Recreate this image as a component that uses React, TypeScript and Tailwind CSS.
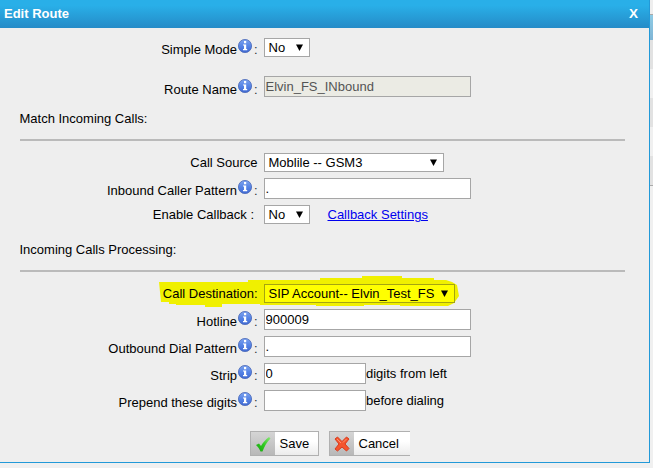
import type { ReactNode } from "react";

function InfoIcon() {
  return (
    <svg width="14" height="14" viewBox="0 0 14 14" className="block">
      <defs>
        <linearGradient id="info" x1="0" y1="0" x2="0" y2="1">
          <stop offset="0" stopColor="#7fa4ee" />
          <stop offset="0.5" stopColor="#5684e6" />
          <stop offset="1" stopColor="#4069d2" />
        </linearGradient>
      </defs>
      <circle cx="7" cy="7" r="6.6" fill="url(#info)" stroke="#4a68b8" strokeWidth="0.8" />
      <path d="M6 2h2.200v2.200H6zM5 5.5h3.200v4.500h1v1.200H5v-1.200h1V6.600H5z" fill="#fff" />
    </svg>
  );
}

type RowProps = {
  label: string;
  height: string;
  labelPad: string;
  iconPad?: string;
  children: ReactNode;
};

function Row({ label, height, labelPad, iconPad, children }: RowProps) {
  return (
    <div className={`flex items-start ${height}`}>
      <div className={`flex shrink-0 justify-end ${iconPad ? "w-[238px] pr-px" : "w-[257.5px]"} ${labelPad}`}>
        {label}
      </div>
      {iconPad && (
        <>
          <div className={`w-[14px] shrink-0 ${iconPad}`}>
            <InfoIcon />
          </div>
          <div className={`w-[5.5px] shrink-0 pl-[2px] text-[#333] ${labelPad}`}>:</div>
        </>
      )}
      <div className="ml-[6.5px] flex items-start">{children}</div>
    </div>
  );
}

function Select({ value, width, yellow }: { value: string; width: string; yellow?: boolean }) {
  return (
    <div
      className={`flex h-[19px] items-center justify-between border pr-[6px] pl-[3.500px] ${width} ${
        yellow ? "border-[#a5a510] bg-[#ffff00]" : "border-[#a6a6a6] bg-white"
      }`}
    >
      <span className="leading-[15px]">{value}</span>
      <svg width="7" height="7" viewBox="0 0 7 7" className="mb-px">
        <path d="M0 0.5H7L3.5 7Z" fill="#000" />
      </svg>
    </div>
  );
}

function Input({ value, width, disabled }: { value: string; width: string; disabled?: boolean }) {
  return (
    <input
      defaultValue={value}
      disabled={disabled}
      className={`block h-[21px] rounded-none border border-[#a6a6a6] pt-0 pr-px pb-px pl-[0.500px] text-[13px] outline-none ${width} ${
        disabled ? "bg-[#ebebe4] text-[#545454]" : "bg-white text-black"
      }`}
    />
  );
}

function Section({ title }: { title: string }) {
  return (
    <div className="ml-5 w-[605px]">
      <div className="-ml-[0.500px] h-7">{title}</div>
      <div className="h-[2px] bg-[#bababa]" />
    </div>
  );
}

function SaveIcon() {
  return (
    <svg width="16" height="16" viewBox="0 0 16 16">
      <defs>
        <linearGradient id="check" x1="1" y1="0" x2="0" y2="1">
          <stop offset="0" stopColor="#8be878" />
          <stop offset="0.5" stopColor="#2fc91f" />
          <stop offset="1" stopColor="#14a30d" />
        </linearGradient>
      </defs>
      <path d="M1 9L4 7.500L6 10C8 6.500 10.500 3.500 14 1L15.500 2.500C12 6 9.500 10 7.500 15.500H5.500C4.500 13 3 11 1 9Z" fill="url(#check)" />
    </svg>
  );
}

function CancelIcon() {
  return (
    <svg width="16" height="16" viewBox="0 0 16 16">
      <path
        d="M1 3L3.500 1L8 5.500L12.500 1L15 3L11 8L15 12.500L12.500 15L8 11L3.500 15L1 13L5 8Z"
        fill="#f4542d"
        stroke="#d93a1d"
        strokeWidth="1"
        strokeLinejoin="round"
      />
      <path d="M3 3L7 7M12.500 3L9 6.500" stroke="#ff8f6a" strokeWidth="1" />
    </svg>
  );
}

function ActionButton({ icon, label, className }: { icon: ReactNode; label: string; className: string }) {
  return (
    <button className={`flex h-[25px] border-y border-l border-[#b0b0b0] text-left ${className}`}>
      <span className="flex h-[23px] w-6 shrink-0 items-center justify-center bg-linear-to-b from-[#d5d5d5] to-[#b8b8b8]">
        {icon}
      </span>
      <span className="h-[23px] grow bg-linear-to-b from-white from-40% to-[#ececec] pt-1 pl-[4.500px] leading-[15px]">
        {label}
      </span>
    </button>
  );
}

export default function App() {
  return (
    <div className="flex h-[468px] w-[653px] overflow-hidden bg-[#f0f0f0] font-['Liberation_Sans',Arial,sans-serif] text-[13px] leading-[15px] whitespace-nowrap text-black">
      <div className="h-[463px] w-[650px] shrink-0 border-r border-b border-[#2299d8] bg-[#eeeeee]">
        <div className="flex h-7 items-start justify-between bg-linear-to-b from-[#29afe8] from-20% to-[#258bc7] pt-[6px] pr-[11px] pl-1 font-bold text-white">
          <span>Edit Route</span>
          <span className="text-[13.500px]">X</span>
        </div>
        <div className="pt-[10px]">
          <Row label="Simple Mode" height="h-[38px]" labelPad="pt-1" iconPad="pt-px">
            <Select value="No" width="w-[46px]" />
          </Row>
          <Row label="Route Name" height="h-[35px]" labelPad="pt-[6px]" iconPad="pt-[3px]">
            <Input value="Elvin_FS_INbound" width="w-[207px]" disabled />
          </Row>
          <Section title="Match Incoming Calls:" />
          <div className="pt-3">
            <Row label="Call Source" height="h-[25px]" labelPad="pt-[2px]">
              <Select value="Moblile -- GSM3" width="w-[180px]" />
            </Row>
            <Row label="Inbound Caller Pattern" height="h-[27px]" labelPad="pt-[5px]" iconPad="pt-[2px]">
              <Input value="." width="w-[207px]" />
            </Row>
            <Row label="Enable Callback :" height="h-[37px]" labelPad="pt-[2px] pr-[3.500px]">
              <Select value="No" width="w-[46px]" />
              <a className="ml-[17.500px] pt-[2px] text-[#0000ee] underline">Callback Settings</a>
            </Row>
          </div>
          <Section title="Incoming Calls Processing:" />
          <div className="relative pt-3">
            <svg className="absolute top-0 left-[156px]" width="304" height="38" viewBox="0 0 304 38">
              <path
                d="M3 10H92V8H164V6H206V4H246V6H278V8H290L296 10L301 13L303 24L298 31L292 34H244V33H208V34H160V33H104V32H66V35H49V33H20V32H13V30H5Z"
                fill="#f0f000"
              />
            </svg>
            <div className="relative">
              <Row label="Call Destination:" height="h-[25px]" labelPad="pt-[2px]">
                <Select value="SIP Account-- Elvin_Test_FS" width="w-[191px]" yellow />
              </Row>
            </div>
            <Row label="Hotline" height="h-[27px]" labelPad="pt-[5px]" iconPad="pt-[2px]">
              <Input value="900009" width="w-[207px]" />
            </Row>
            <Row label="Outbound Dial Pattern" height="h-[27px]" labelPad="pt-[5px]" iconPad="pt-[2px]">
              <Input value="." width="w-[207px]" />
            </Row>
            <Row label="Strip" height="h-[27px]" labelPad="pt-[5px]" iconPad="pt-[2px]">
              <Input value="0" width="w-[102px]" />
              <span className="pt-[3px]">digits from left</span>
            </Row>
            <Row label="Prepend these digits" height="h-[41px]" labelPad="pt-[5px]" iconPad="pt-[2px]">
              <Input value="" width="w-[102px]" />
              <span className="pt-[3px]">before dialing</span>
            </Row>
          </div>
          <div className="flex gap-[10px] pl-[250px]">
            <ActionButton icon={<SaveIcon />} label="Save" className="w-[69px] border-r" />
            <ActionButton icon={<CancelIcon />} label="Cancel" className="w-[81px]" />
          </div>
        </div>
      </div>
      <div className="w-[3px]">
        <div className="h-[14px] bg-[#eeeeee]" />
        <div className="h-px bg-[#aaaaaa]" />
        <div className="h-[25px] bg-linear-to-b from-[#8ecbe5] to-[#80b5d5]" />
        <div className="h-[29px] bg-[#e2e2e2]" />
        <div className="h-[29px] bg-[#f0f0f0]" />
        <div className="h-[29px] bg-[#e2e2e2]" />
        <div className="h-[29px] bg-[#f0f0f0]" />
        <div className="h-[29px] bg-[#e2e2e2]" />
        <div className="h-px bg-[#aaaaaa]" />
      </div>
    </div>
  );
}
